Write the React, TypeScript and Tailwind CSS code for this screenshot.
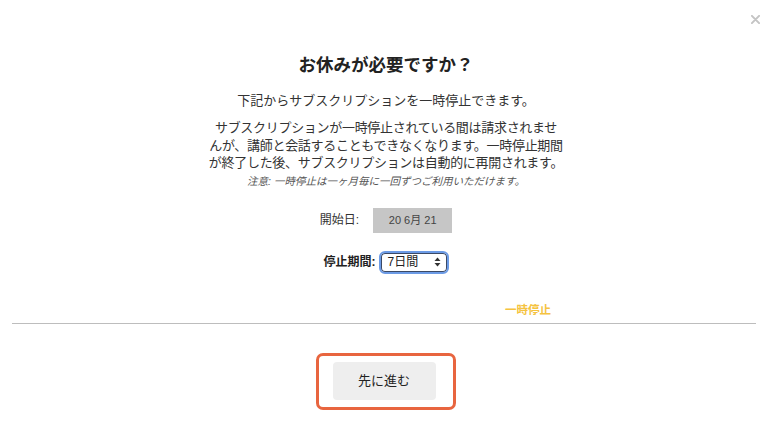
import React from "react";

export default function App() {
  return (
    <div className="relative w-[772px] h-[425px] bg-white overflow-hidden font-['Liberation_Sans','Noto_Sans_CJK_JP',sans-serif] text-[#333]">
      <button className="absolute top-[15px] right-[12px] w-[9px] h-[9px]" aria-label="close">
        <svg viewBox="0 0 10 10" width="9" height="9">
          <path d="M1 1 L9 9 M9 1 L1 9" stroke="#c4c4c4" strokeWidth="2.2" strokeLinecap="round" />
        </svg>
      </button>
      <div className="flex flex-col items-center pt-[53px]">
        <h1 className="text-[17.5px] leading-[24px] font-bold text-[#222]">お休みが必要ですか？</h1>
        <p className="mt-[15px] text-[13px] leading-[18px]">下記からサブスクリプションを一時停止できます。</p>
        <p className="mt-[9px] text-[13px] leading-[17.5px] text-center whitespace-nowrap tracking-[-0.3px]">
          サブスクリプションが一時停止されている間は請求されませ
          <br />
          んが、講師と会話することもできなくなります。一時停止期間
          <br />
          が終了した後、サブスクリプションは自動的に再開されます。
        </p>
        <p className="mt-[2px] text-[10.5px] leading-[14px] italic text-[#555]">注意: 一時停止は一ヶ月毎に一回ずつご利用いただけます。</p>

        <div className="mt-[20px] flex items-center gap-[14px]">
          <span className="text-[12px] leading-[16px] text-[#333]">開始日:</span>
          <div className="w-[79px] h-[25px] bg-[#c6c6c6] flex items-center justify-center text-[11px] text-[#444]">20 6月 21</div>
        </div>

        <div className="mt-[18px] flex items-center gap-[3px]">
          <span className="text-[12px] leading-[16px] font-bold text-[#222]">停止期間:</span>
          <div className="w-[70px] h-[23px] rounded-[6px] border-2 border-[#6c9be6] bg-white flex items-center justify-between pl-[7px] pr-[6px] shadow-[inset_0_0_0_1px_#3b4a66]">
            <span className="text-[12px] text-[#222]">7日間</span>
            <svg width="7" height="10" viewBox="0 0 7 10">
              <path d="M3.5 0.5 L6.5 4 L0.5 4 Z" fill="#333" />
              <path d="M3.5 9.5 L6.5 6 L0.5 6 Z" fill="#333" />
            </svg>
          </div>
        </div>

        <div className="self-end mr-[221px] mt-[28px] text-[11.5px] leading-[16px] font-bold text-[#f5c340]">一時停止</div>
      </div>

      <div className="ml-[12px] mr-[16px] mt-[5px] h-px bg-[#bdbdbd]" />

      <div className="flex justify-center mt-[29px]">
        <div className="w-[140px] h-[57px] border-[3px] border-[#e8653f] rounded-[7px] flex items-center justify-center">
          <div className="w-[103px] h-[38px] bg-[#eeeeee] rounded-[4px] flex items-center justify-center text-[13px] text-[#222] ml-[-4px]">先に進む</div>
        </div>
      </div>
    </div>
  );
}
